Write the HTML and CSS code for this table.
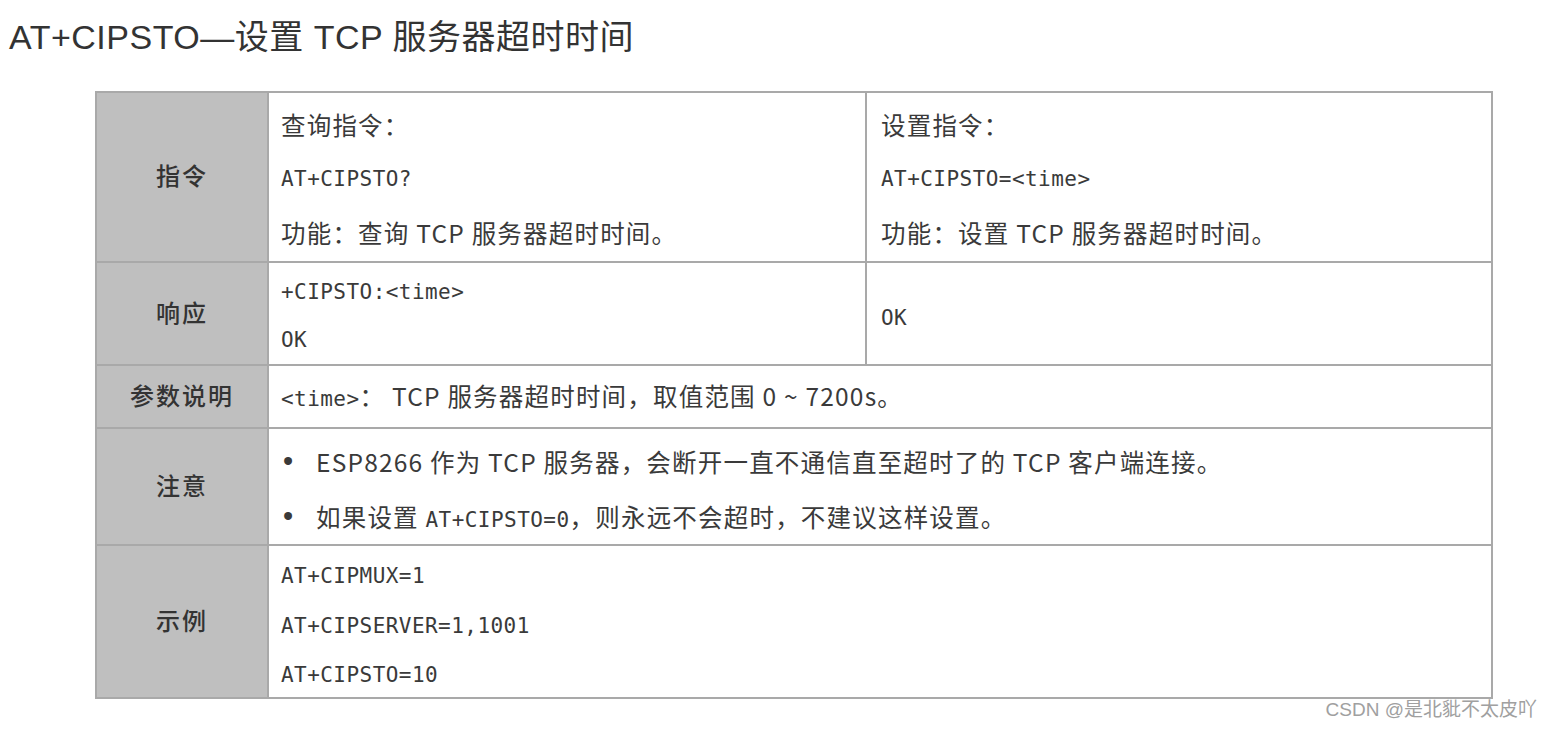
FILE: index.html
```html
<!DOCTYPE html>
<html lang="zh-CN">
<head>
<meta charset="utf-8">
<title>AT+CIPSTO</title>
<link rel="stylesheet" href="styles.css">
</head>
<body>
<h1 class="title">AT+CIPSTO—设置 TCP 服务器超时时间</h1>
<table class="spec">
  <colgroup>
    <col class="c-head">
    <col class="c-mid">
    <col class="c-right">
  </colgroup>
  <tr class="r1">
    <th>指令</th>
    <td>
      <div class="ln l54">查询指令：</div>
      <div class="ln l54 mono">AT+CIPSTO?</div>
      <div class="ln l54">功能：查询 TCP 服务器超时时间。</div>
    </td>
    <td class="right">
      <div class="ln l54">设置指令：</div>
      <div class="ln l54 mono">AT+CIPSTO=&lt;time&gt;</div>
      <div class="ln l54">功能：设置 TCP 服务器超时时间。</div>
    </td>
  </tr>
  <tr class="r2">
    <th>响应</th>
    <td>
      <div class="ln l48 mono">+CIPSTO:&lt;time&gt;</div>
      <div class="ln l48 mono">OK</div>
    </td>
    <td class="right ok">
      <div class="ln l48 mono">OK</div>
    </td>
  </tr>
  <tr class="r3">
    <th>参数说明</th>
    <td colspan="2">
      <div class="ln l49"><span class="mono">&lt;time&gt;</span>： TCP 服务器超时时间，取值范围 0 ~ 7200s。</div>
    </td>
  </tr>
  <tr class="r4">
    <th>注意</th>
    <td colspan="2">
      <div class="ln l55 bul"><span class="dot">•</span><span>ESP8266 作为 TCP 服务器，会断开一直不通信直至超时了的 TCP 客户端连接。</span></div>
      <div class="ln l55 bul"><span class="dot">•</span><span>如果设置 <span class="mono">AT+CIPSTO=0</span>，则永远不会超时，不建议这样设置。</span></div>
    </td>
  </tr>
  <tr class="r5">
    <th>示例</th>
    <td colspan="2">
      <div class="ln tight mono">AT+CIPMUX=1</div>
      <div class="ln tight mono">AT+CIPSERVER=1,1001</div>
      <div class="ln tight mono">AT+CIPSTO=10</div>
    </td>
  </tr>
</table>
<div class="mark">CSDN @是北豼不太皮吖</div>
</body>
</html>
```

FILE: styles.css
```css
html, body {
  margin: 0;
  padding: 0;
  background: #ffffff;
}
body {
  font-family: "Noto Sans CJK SC", "Noto Sans", sans-serif;
  color: #3a3a3a;
}
.title {
  margin: 0;
  padding: 14px 0 0 9px;
  height: 77px;
  box-sizing: border-box;
  font-family: "Liberation Sans", "Noto Sans CJK SC", sans-serif;
  font-weight: 400;
  font-size: 34px;
  line-height: 46px;
  color: #333333;
  letter-spacing: 0.5px;
}
.spec {
  margin: 14px 0 0 95px;
  width: 1398px;
  table-layout: fixed;
  border-collapse: collapse;
  border: 2px solid #a9a9a9;
}
.c-head { width: 172px; }
.c-mid { width: 598px; }
.spec th,
.spec td {
  border: 2px solid #a9a9a9;
  padding: 0 0 0 12px;
  vertical-align: top;
  text-align: left;
  font-size: 24.5px;
  letter-spacing: 1.2px;
  font-weight: 400;
}
.spec th {
  background: #bfbfbf;
  text-align: center;
  vertical-align: middle;
  padding: 0 0 5px 0;
  font-size: 24px;
  font-weight: 500;
  color: #333333;
  letter-spacing: 2px;
}
.spec td.right {
  padding-left: 14px;
}
.r1 th { height: 163px; }
.r1 td { padding-top: 5px; }
.r2 th { height: 96px; }
.r2 td { padding-top: 5px; }
.r2 td.ok { padding-top: 31px; }
.r3 th { height: 56px; }
.r3 td { vertical-align: middle; padding-top: 2px; }
.r4 th { height: 109px; }
.r4 td { padding-top: 5px; }
.r5 th { height: 146px; }
.r5 td { padding-top: 15px; }
.ln { white-space: nowrap; }
.l54 { line-height: 54px; }
.l49 { line-height: 49px; }
.l48 { line-height: 48px; }
.l55 { line-height: 55px; height: 55px; }
.tight {
  line-height: 30px;
  margin-bottom: 19.5px;
}
.tight:last-child { margin-bottom: 0; }
.mono {
  font-family: "DejaVu Sans Mono", monospace;
  font-size: 21px;
  letter-spacing: 0.45px;
}
.bul {
  display: flex;
}
.dot {
  width: 35px;
  padding-left: 2px;
  box-sizing: border-box;
  flex: none;
  font-family: "Liberation Sans", sans-serif;
  font-size: 29px;
}
.mark {
  text-align: right;
  padding-right: 16px;
  font-size: 19px;
  line-height: 21px;
  color: #a0a0a0;
  font-family: "Liberation Sans", "Noto Sans CJK SC", sans-serif;
}
```
